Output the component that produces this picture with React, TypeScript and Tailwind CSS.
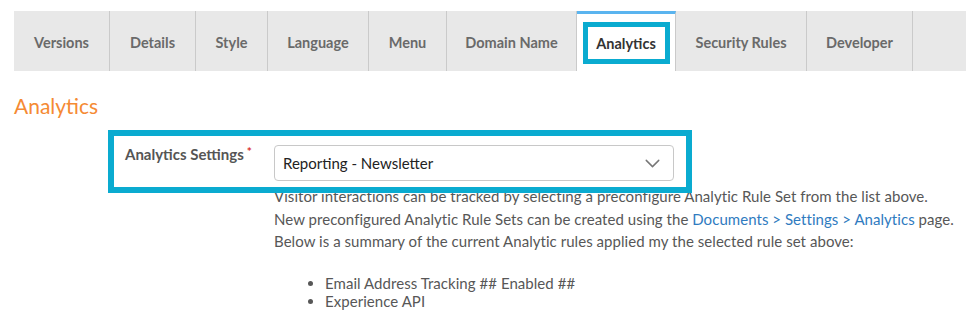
import React from 'react';
import { ChevronDown } from 'lucide-react';

interface Tab {
  label: string;
  width: string;
  active?: boolean;
}

const tabs: Tab[] = [
  { label: 'Versions', width: 'w-[96px]' },
  { label: 'Details', width: 'w-[86px]' },
  { label: 'Style', width: 'w-[72px]' },
  { label: 'Language', width: 'w-[101px]' },
  { label: 'Menu', width: 'w-[78px]' },
  { label: 'Domain Name', width: 'w-[130px]' },
  { label: 'Analytics', width: 'w-[99px]', active: true },
  { label: 'Security Rules', width: 'w-[131px]' },
  { label: 'Developer', width: 'w-[106px]' },
];

const App: React.FC = () => {
  return (
    <div className="w-[966px] h-[330px] overflow-hidden bg-white pt-[11px] font-['Lato',sans-serif]">
      {/* tab strip */}
      <div className="ml-[14px] flex h-[60px] bg-[#e8e8e8]">
        {tabs.map((tab) =>
          tab.active ? (
            <div
              key={tab.label}
              className={`${tab.width} flex items-center justify-center border-r border-t-[3px] border-r-[#cacaca] border-t-[#5ab4ef] bg-white`}
            >
              <span className="flex h-[42px] w-[87px] items-center justify-center border-[5px] border-[#0aabd0] pt-[2px] text-[14.5px] font-bold text-[#333]">
                {tab.label}
              </span>
            </div>
          ) : (
            <div
              key={tab.label}
              className={`${tab.width} flex items-center justify-center border-r border-[#cacaca] pt-[4px] text-[14.5px] font-bold text-[#6a6a6a]`}
            >
              {tab.label}
            </div>
          )
        )}
        <div className="flex-1" />
      </div>

      <div className="px-[14px]">
        <h2 className="mt-[22px] text-[21px] leading-[26px] text-[#f58a33]">Analytics</h2>

        {/* settings row */}
        <div className="relative ml-[111px] mt-[26px] flex w-[549px] items-start">
          <label className="w-[149px] text-[15px] font-bold leading-[18px] text-[#555]">
            Analytics Settings
            <span className="relative -top-[4px] ml-[3px] text-[12px] text-[#d9302c]">*</span>
          </label>
          <div className="flex h-[36px] w-[400px] items-center justify-between rounded-[4px] border border-[#c8c8c8] bg-white pl-[8px] pr-[8px]">
            <span className="text-[15px] text-[#222]">Reporting - Newsletter</span>
            <ChevronDown size={25} strokeWidth={1.4} className="text-[#777]" />
          </div>
          <span className="pointer-events-none absolute -bottom-[12px] -left-[17px] -right-[18px] -top-[15px] z-10 border-[6px] border-[#0aabd0]" />
        </div>

        {/* description */}
        <div className="ml-[260px] mt-[4px] whitespace-nowrap text-[15px] leading-[22.5px] tracking-[0.05px] text-[#575757]">
          <p>Visitor interactions can be tracked by selecting a preconfigure Analytic Rule Set from the list above.</p>
          <p>
            New preconfigured Analytic Rule Sets can be created using the{' '}
            <a className="text-[#2f7bbf]">Documents &gt; Settings &gt; Analytics</a> page.
          </p>
          <p>Below is a summary of the current Analytic rules applied my the selected rule set above:</p>
          <ul className="mt-[21px] list-disc pl-[51px] leading-[18px]">
            <li>Email Address Tracking ## Enabled ##</li>
            <li>Experience API</li>
          </ul>
        </div>
      </div>
    </div>
  );
};

export default App;
